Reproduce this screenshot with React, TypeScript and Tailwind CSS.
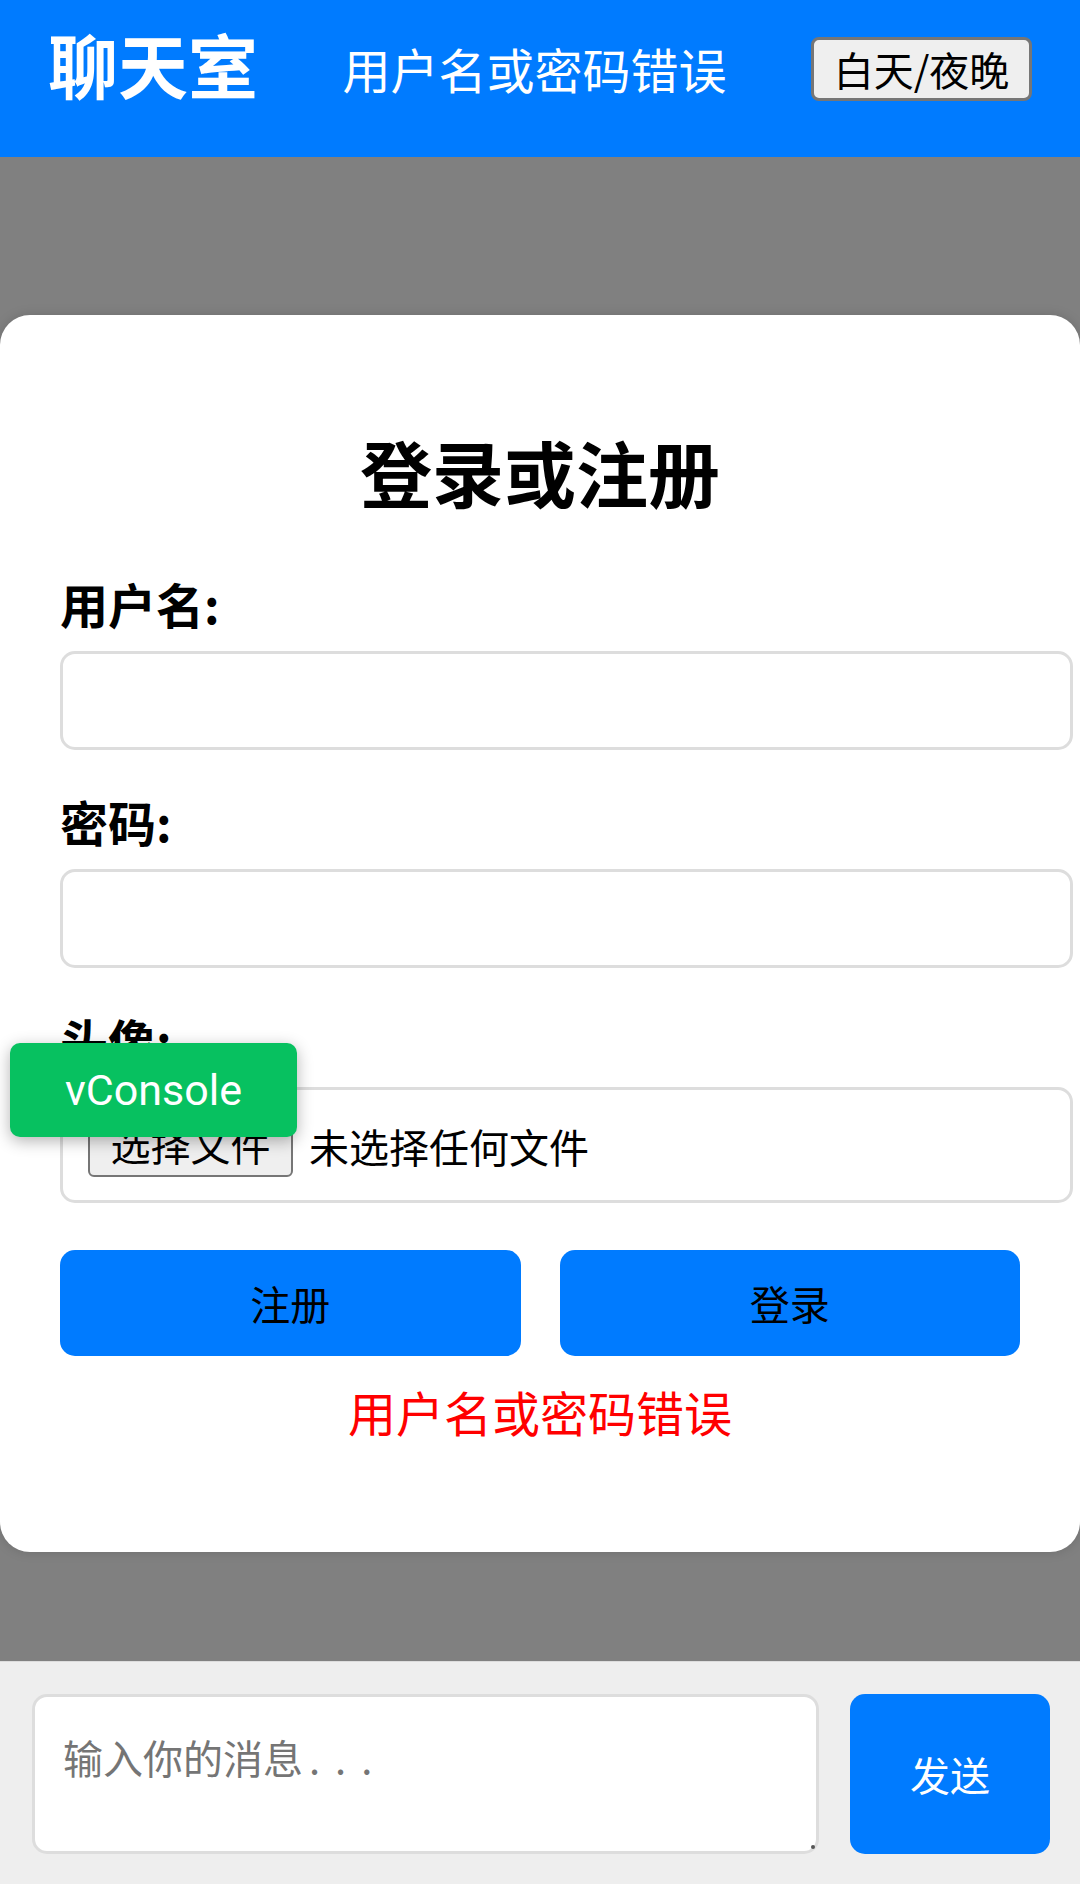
import React from 'react'

export default function App() {
  return (
    <div className="relative flex h-[1884px] w-[1080px] flex-col overflow-hidden font-['Noto_Sans_CJK_SC',sans-serif] text-black">
      {/* 顶栏 */}
      <header className="flex h-[157px] shrink-0 items-start justify-between bg-[#007bff] px-[48px]">
        <h1 className="mt-[29px] text-[70px] font-bold leading-none text-white">
          聊天室
        </h1>
        <span className="mt-[44px] text-[48px] leading-none text-white">
          用户名或密码错误
        </span>
        <button className="mt-[37px] flex h-[64px] w-[221px] items-center justify-center rounded-[8px] border-[3px] border-[#767676] bg-[#efefef] text-[40px] leading-none text-black">
          白天/夜晚
        </button>
      </header>

      {/* 遮罩 + 登录框 */}
      <main className="flex flex-1 flex-col bg-[#808080] pt-[158px] pb-[109px]">
        <div className="flex h-[1237px] flex-col rounded-[30px] bg-white px-[60px] pt-[120px] shadow-[0_0_12px_rgba(0,0,0,0.15)]">
          <h2 className="text-center text-[72px] font-bold leading-none">
            登录或注册
          </h2>

          <label className="mt-[72px] text-[48px] font-bold leading-none">
            用户名:
          </label>
          <input
            type="text"
            className="mt-[24px] h-[99px] w-[1013px] rounded-[15px] border-[3px] border-[#dddddd] bg-white outline-none"
          />

          <label className="mt-[47px] text-[48px] font-bold leading-none">
            密码:
          </label>
          <input
            type="password"
            className="mt-[24px] h-[99px] w-[1013px] rounded-[15px] border-[3px] border-[#dddddd] bg-white outline-none"
          />

          <label className="mt-[47px] text-[48px] font-bold leading-none">
            头像:
          </label>
          <div className="mt-[24px] flex h-[116px] w-[1013px] items-start rounded-[15px] border-[3px] border-[#dddddd] pl-[25px] pt-[13px]">
            <span className="flex h-[74px] w-[205px] items-center justify-center rounded-[6px] border-2 border-[#767676] bg-[#efefef] pt-[8px] text-[40px] leading-none">
              选择文件
            </span>
            <span className="ml-[16px] mt-[23px] text-[40px] leading-none">
              未选择任何文件
            </span>
          </div>

          <div className="mt-[47px] flex gap-[39px]">
            <button className="flex h-[106px] flex-1 items-center justify-center rounded-[15px] bg-[#007bff] text-[40px] leading-none text-black">
              注册
            </button>
            <button className="flex h-[106px] flex-1 items-center justify-center rounded-[15px] bg-[#007bff] text-[40px] leading-none text-black">
              登录
            </button>
          </div>

          <p className="mt-[31px] text-center text-[48px] leading-none text-[#ff0000]">
            用户名或密码错误
          </p>
        </div>
      </main>

      {/* 输入栏 */}
      <footer className="flex h-[223px] shrink-0 gap-[31px] border-t border-[#dcdcdc] bg-[#eeeeee] pl-[32px] pr-[30px] pt-[32px] pb-[30px]">
        <div className="relative flex-1">
          <textarea
            aria-label="输入你的消息..."
            className="h-[160px] w-full resize-none rounded-[15px] border-[3px] border-[#dddddd] bg-white pl-[28px] pt-[40px] text-[40px] leading-none outline-none"
          />
          {/* 占位文字 */}
          <span className="pointer-events-none absolute left-[31px] top-[43px] text-[40px] leading-none text-[#757575]">
            输入你的消息<span className="ml-[6px] tracking-[15px]">...</span>
          </span>
          <span className="absolute bottom-[5px] right-[4px] h-[4px] w-[4px] rounded-full bg-[#555]" />
        </div>
        <button className="flex h-[160px] w-[200px] items-center justify-center rounded-[15px] bg-[#007bff] text-[40px] leading-none text-white">
          发送
        </button>
      </footer>

      {/* vConsole 悬浮按钮 */}
      <div className="absolute left-[10px] top-[1043px] flex h-[94px] w-[287px] items-center justify-center rounded-[10px] bg-[#07c160] font-['Roboto',sans-serif] text-[43px] leading-none text-white shadow-[0_4px_16px_rgba(0,0,0,0.3)]">
        vConsole
      </div>
    </div>
  )
}
